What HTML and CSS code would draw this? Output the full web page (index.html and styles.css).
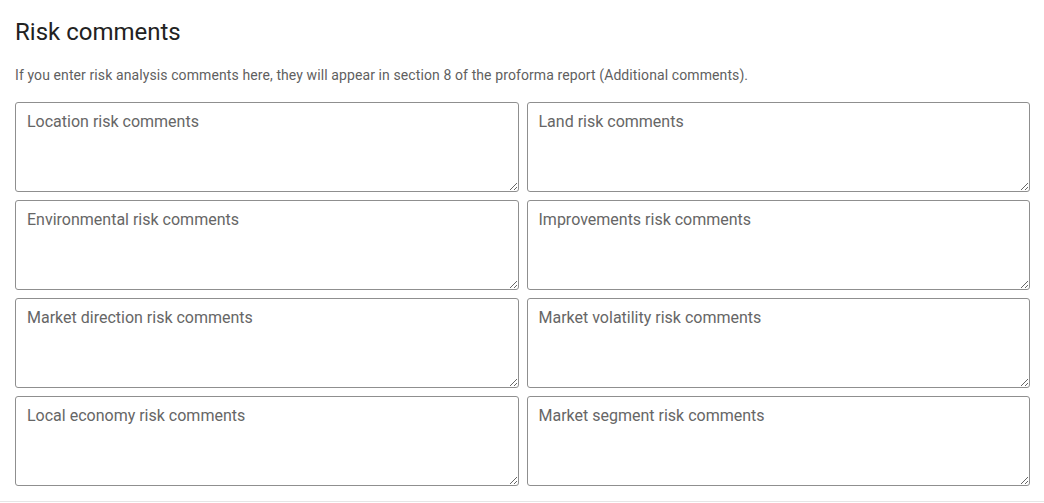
FILE: index.html
```html
<!DOCTYPE html>
<html lang="en">
<head>
    <meta charset="UTF-8">
    <meta name="viewport" content="width=device-width, initial-scale=1.0">
    <title>Risk comments</title>
    <link rel="stylesheet" href="styles.css">
</head>
<body>
    <section class="risk-section">
        <h1>Risk comments</h1>
        <p class="hint">If you enter risk analysis comments here, they will appear in section 8 of the proforma report (Additional comments).</p>

        <div class="comment-grid">
            <textarea placeholder="Location risk comments"></textarea>
            <textarea placeholder="Land risk comments"></textarea>
            <textarea placeholder="Environmental risk comments"></textarea>
            <textarea placeholder="Improvements risk comments"></textarea>
            <textarea placeholder="Market direction risk comments"></textarea>
            <textarea placeholder="Market volatility risk comments"></textarea>
            <textarea placeholder="Local economy risk comments"></textarea>
            <textarea placeholder="Market segment risk comments"></textarea>
        </div>
    </section>
</body>
</html>
```

FILE: styles.css
```css
body {
    margin: 0;
    font-family: Roboto, "Liberation Sans", Arial, sans-serif;
    background: #fff;
    color: #222;
}

.risk-section {
    padding: 16px 14px 15px 15px;
    border-bottom: 1px solid #e6e6e6;
}

.risk-section h1 {
    margin: 0;
    font-size: 24px;
    font-weight: 400;
    line-height: 32px;
    color: #222;
}

.hint {
    margin: 17px 0 17px;
    font-size: 14px;
    line-height: 20px;
    letter-spacing: 0.1px;
    color: #5f5f5f;
}

.comment-grid {
    display: grid;
    grid-template-columns: 1fr 1fr;
    gap: 8px;
}

.comment-grid textarea {
    box-sizing: border-box;
    width: 100%;
    height: 90px;
    margin: 0;
    padding: 8px 11px;
    border: 1px solid #8f8f8f;
    border-radius: 3px;
    font-family: inherit;
    font-size: 16px;
    line-height: 22px;
    color: #333;
    resize: vertical;
}

.comment-grid textarea::placeholder {
    color: #666;
}
```
